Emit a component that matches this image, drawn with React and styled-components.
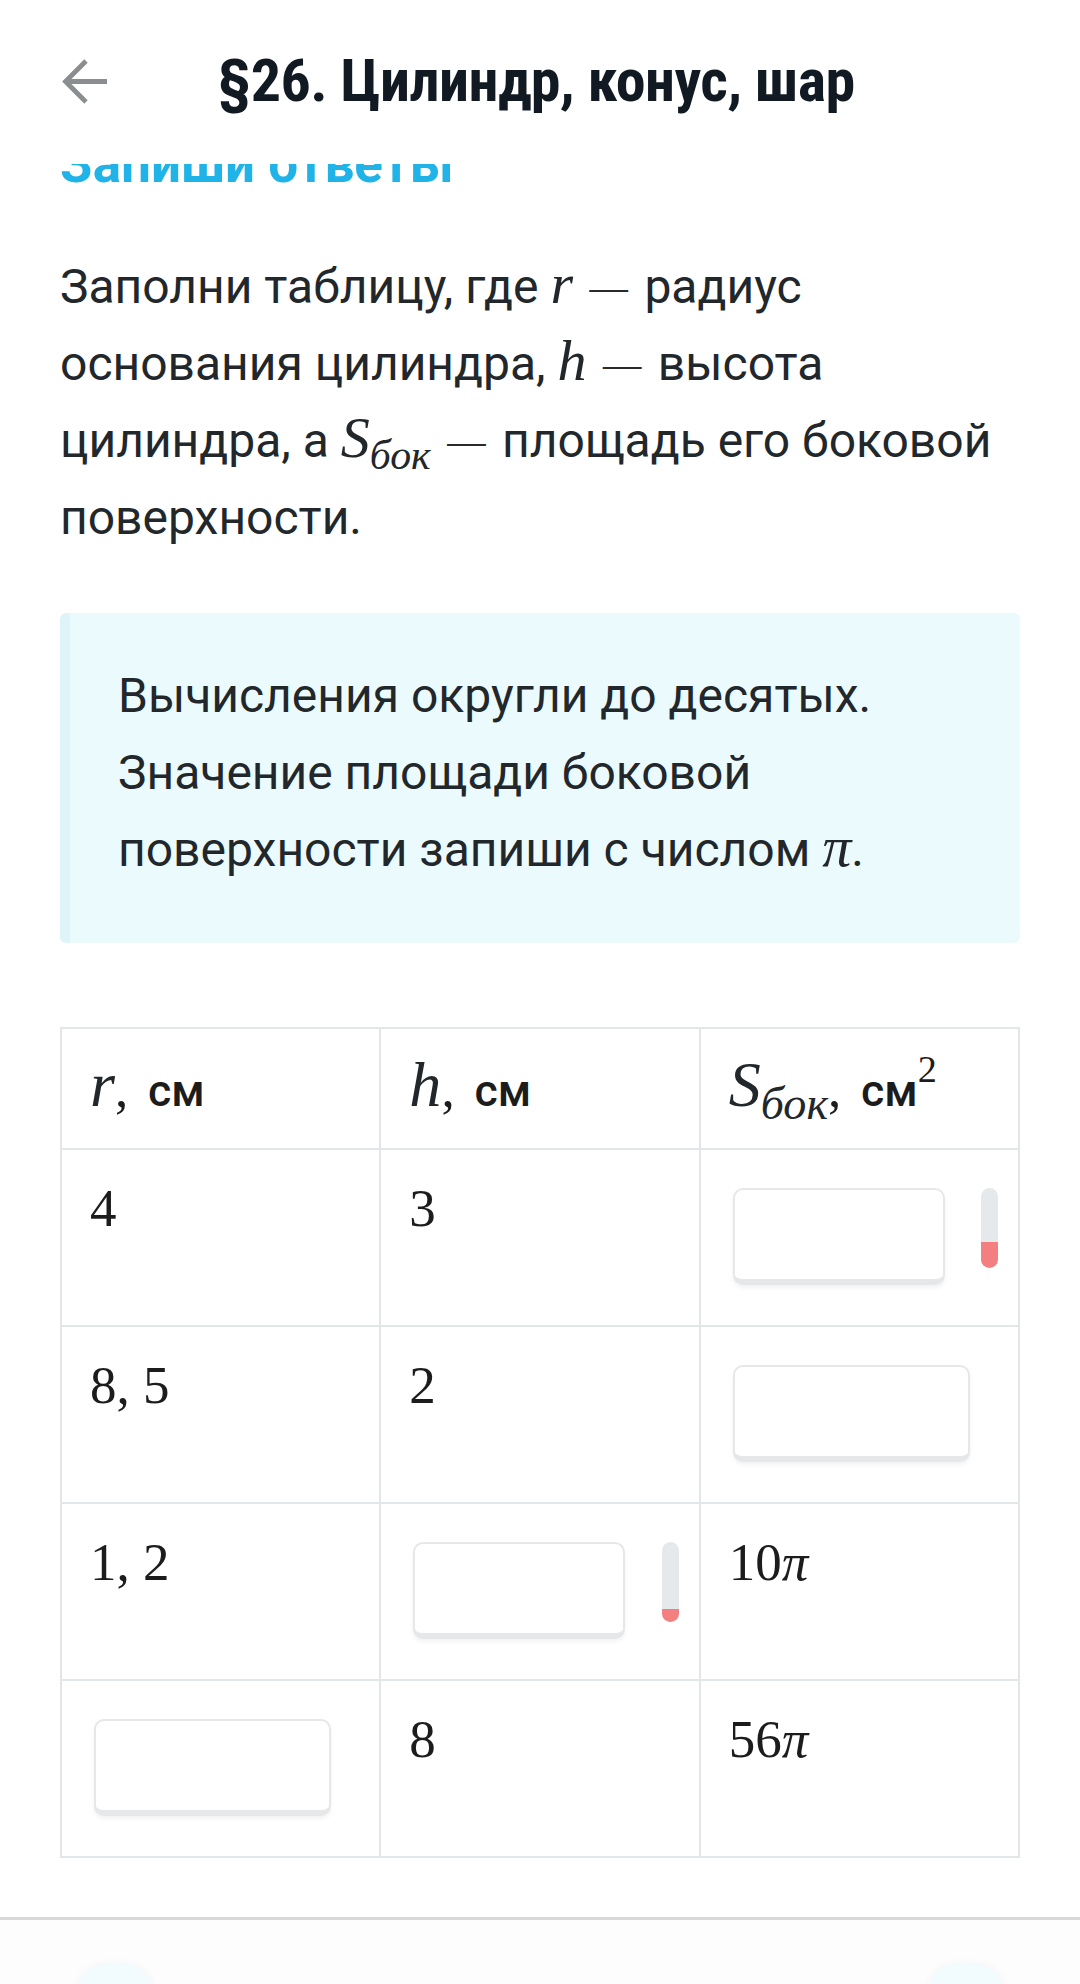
import React from 'react';
import styled, { createGlobalStyle } from 'styled-components';

const rows = [
  { r: '4', h: '3', s: null, sFill: 26 },
  { r: '8, 5', h: '2', s: null },
  { r: '1, 2', h: null, hFill: 13, s: '10π' },
  { r: null, h: '8', s: '56π' },
];

const Answer = ({ fill }) => (
  <Field>
    <Input $narrow={fill !== undefined} readOnly />
    {fill !== undefined && <Gauge $fill={fill} />}
  </Field>
);

const App = () => {
  return (
    <Page>
      <GlobalStyle />
      {/* Top bar */}
      <Header>
        <Back aria-label="Назад">
          <svg width="47" height="45" viewBox="0 0 47 45" fill="none">
            <path d="M46 22.5H5M25 2L4.5 22.5L25 43" stroke="#8b8e91" strokeWidth="4.8" />
          </svg>
        </Back>
        <Title>§26. Цилиндр, конус, шар</Title>
      </Header>

      <Content>
        <Heading>Запиши ответы</Heading>

        <Text>
          Заполни таблицу, где <M>r</M> <Dash>—</Dash> радиус основания цилиндра, <M>h</M>{' '}
          <Dash>—</Dash> высота цилиндра, а <M>S<sub>бок</sub></M> <Dash>—</Dash> площадь его
          боковой поверхности.
        </Text>

        {/* Hint */}
        <Note>
          Вычисления округли до десятых. Значение площади боковой поверхности запиши с числом{' '}
          <M>π</M>.
        </Note>

        {/* Table */}
        <Table>
          <tbody>
            <tr>
              <Head><M>r</M><Num>,</Num> <Unit>см</Unit></Head>
              <Head><M>h</M><Num>,</Num> <Unit>см</Unit></Head>
              <Head><M>S<sub>бок</sub></M><Num>,</Num> <Unit>см<sup>2</sup></Unit></Head>
            </tr>
            {rows.map((row, i) => (
              <tr key={i}>
                <Cell $gauge={row.rFill !== undefined}>
                  {row.r ? <Num>{row.r}</Num> : <Answer fill={row.rFill} />}
                </Cell>
                <Cell $gauge={row.hFill !== undefined}>
                  {row.h ? <Num>{row.h}</Num> : <Answer fill={row.hFill} />}
                </Cell>
                <Cell $gauge={row.sFill !== undefined}>
                  {row.s ? <Num>{row.s.replace('π', '')}<i>π</i></Num> : <Answer fill={row.sFill} />}
                </Cell>
              </tr>
            ))}
          </tbody>
        </Table>
      </Content>

      <Divider />
      <Footer>
        <RoundButton />
        <RoundButton />
      </Footer>
    </Page>
  );
};

const GlobalStyle = createGlobalStyle`
  html, body {
    margin: 0;
    padding: 0;
    background: #ffffff;
  }
  body {
    font-family: Roboto, "Noto Sans", sans-serif;
    color: #22272b;
    overflow: hidden;
  }
`;

const Page = styled.div`
  width: 1080px;
  min-height: 1984px;
`;

// Header
const Header = styled.header`
  position: relative;
  z-index: 2;
  height: 164px;
  box-sizing: border-box;
  padding: 0 0 2px 61px;
  display: flex;
  align-items: center;
  gap: 110px;
  background: #ffffff;
`;

const Back = styled.div`
  width: 47px;
  height: 45px;
  display: flex;
`;

const Title = styled.h1`
  margin: 0;
  font-family: "Liberation Sans Narrow", "Roboto Condensed", Roboto, sans-serif;
  font-weight: 700;
  font-size: 60px;
  line-height: 70px;
  color: #111a22;
  letter-spacing: -0.5px;
`;

const Content = styled.main`
  padding: 0 60px;
`;

const Heading = styled.h2`
  position: relative;
  z-index: 1;
  margin: -30px 0 0;
  font-family: Roboto, sans-serif;
  font-weight: 700;
  font-size: 53px;
  line-height: 60px;
  color: #1fb3e8;
`;

const Text = styled.p`
  margin: 54px 0 0;
  font-size: 48px;
  line-height: 77px;
  color: #22272b;
`;

const M = styled.span`
  font-family: "Liberation Serif", "DejaVu Serif", serif;
  font-style: italic;
  font-size: 1.21em;
  line-height: 0.8;

  sub {
    font-size: 0.72em;
    vertical-align: -0.28em;
    line-height: 0;
  }
`;

const Dash = styled.span`
  margin: 0 0.12em;
  font-family: "Liberation Serif", serif;
  font-size: 0.8em;
  line-height: 1;
  vertical-align: 0.08em;
  color: #2a2a2a;
`;

const Note = styled.div`
  margin-top: 57px;
  padding: 44px 40px 55px 48px;
  border-left: 10px solid #def4f9;
  border-radius: 6px;
  background: #ebfafd;
  font-size: 48px;
  line-height: 77px;
  color: #22272b;
`;

const Table = styled.table`
  width: 100%;
  margin-top: 84px;
  border-collapse: collapse;
  table-layout: fixed;
`;

const Head = styled.td`
  height: 63px;
  padding: 28px;
  border: 2px solid #e3e6e8;
  vertical-align: top;
  font-size: 53px;
  line-height: 63px;
  white-space: nowrap;
`;

const Cell = styled.td`
  height: 119px;
  padding: 28px ${(p) => (p.$gauge ? '20px' : '28px')} 28px 28px;
  border: 2px solid #e3e6e8;
  vertical-align: top;
  font-size: 53px;
  line-height: 60px;
`;

const Num = styled.span`
  font-family: "Liberation Serif", "DejaVu Serif", serif;
  color: #1c1c1c;

  i {
    font-style: italic;
  }
`;

const Unit = styled.span`
  margin-left: 0.15em;
  font-family: Roboto, "Liberation Sans", sans-serif;
  font-weight: 500;
  font-size: 0.84em;
  line-height: 0.8;
  color: #1c1c1c;

  sup {
    font-family: "Liberation Serif", serif;
    font-weight: 400;
    font-size: 0.86em;
    vertical-align: 0.62em;
    line-height: 0;
  }
`;

const Field = styled.div`
  display: flex;
  align-items: flex-start;
  padding: 10px 0 0 4px;
`;

const Input = styled.input`
  width: ${(p) => (p.$narrow ? '212px' : '237px')};
  height: 97px;
  box-sizing: border-box;
  border: 2px solid #e5e7e9;
  border-bottom-width: 6px;
  border-radius: 10px;
  background: #ffffff;
  box-shadow: 0 3px 4px rgba(0, 0, 0, 0.05);
  outline: none;
`;

const Gauge = styled.div`
  margin-left: auto;
  width: 17px;
  height: 80px;
  border-radius: 9px;
  background: linear-gradient(
    to top,
    #f37f80 ${(p) => p.$fill}px,
    #e6e9ec ${(p) => p.$fill}px
  );
`;

const Divider = styled.hr`
  margin: 59px 0 0;
  border: 0;
  height: 3px;
  background: #d8d8d8;
`;

const Footer = styled.footer`
  display: flex;
  justify-content: space-between;
  padding: 44px 75px 0 76px;
  background: #fdfdfd;
`;

const RoundButton = styled.div`
  width: 78px;
  height: 70px;
  border-radius: 30px;
  background: #f2fcfe;
  box-shadow: 0 0 10px rgba(0, 0, 0, 0.04);
`;

export default App;
